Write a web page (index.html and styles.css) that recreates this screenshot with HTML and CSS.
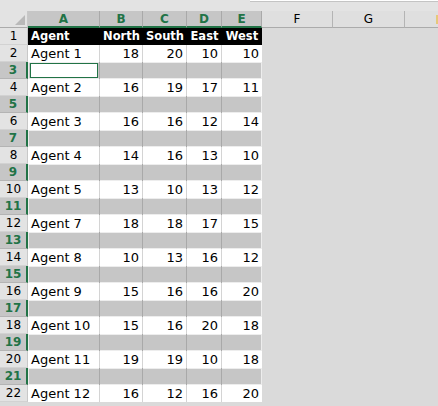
FILE: index.html
```html
<!DOCTYPE html>
<html lang="en">
<head>
    <meta charset="UTF-8">
    <meta name="viewport" content="width=device-width, initial-scale=1.0">
    <title>Agents by region</title>
    <link rel="stylesheet" href="styles.css">
</head>
<body>
    <div class="sheet">
        <div class="top"><div class="fx"></div></div>

        <div class="row head">
            <div class="corner"><span class="tri"></span></div>
            <div class="ch sel w-a">A</div>
            <div class="ch sel w-b">B</div>
            <div class="ch sel w-c">C</div>
            <div class="ch sel w-d">D</div>
            <div class="ch sel w-e">E</div>
            <div class="ch w-f">F</div>
            <div class="ch w-g">G</div>
            <div class="ch w-h"><span class="tip"></span></div>
        </div>

        <div id="rows"></div>
    </div>

<script>
    const rows = document.getElementById('rows');

    // every even row is an empty spacer row that is part of the selection
    const data = [
        ['Agent 1', 18, 20, 10, 10],
        ['Agent 2', 16, 19, 17, 11],
        ['Agent 3', 16, 16, 12, 14],
        ['Agent 4', 14, 16, 13, 10],
        ['Agent 5', 13, 10, 13, 12],
        ['Agent 7', 18, 18, 17, 15],
        ['Agent 8', 10, 13, 16, 12],
        ['Agent 9', 15, 16, 16, 20],
        ['Agent 10', 15, 16, 20, 18],
        ['Agent 11', 19, 19, 10, 18],
        ['Agent 12', 16, 12, 16, 20]
    ];
    const widths = ['w-a', 'w-b', 'w-c', 'w-d', 'w-e'];

    function addRow(num, values, kind) {
        const row = document.createElement('div');
        row.className = 'row';
        let html = `<div class="rh ${kind === 'pick' ? 'on' : ''}">${num}</div>`;
        html += `<div class="cells ${kind}">`;
        widths.forEach((w, i) => {
            const v = values ? values[i] : '';
            const cls = i === 0 ? 'txt' : (kind === 'title' ? 'mid' : 'num');
            const active = (num === 3 && i === 0) ? '<span class="active"></span>' : '';
            html += `<div class="c ${w} ${cls}">${active}${v}</div>`;
        });
        html += '</div>';
        row.innerHTML = html;
        rows.appendChild(row);
    }

    addRow(1, ['Agent', 'North', 'South', 'East', 'West'], 'title');
    data.forEach((item, i) => {
        addRow(2 + i * 2, item, 'plain');
        if (i < data.length - 1) {
            addRow(3 + i * 2, null, 'pick');
        }
    });
</script>
</body>
</html>
```

FILE: styles.css
```css
body {
    margin: 0;
    background-color: #dadada;
    font-family: "DejaVu Sans", Verdana, sans-serif;
    color: #000;
    overflow: hidden;
}

.sheet {
    width: 438px;
    height: 406px;
}

.top {
    height: 11px;
    background-color: #e3e3e3;
}

.fx {
    margin-left: 250px;
    height: 1px;
    background: #fff;
    border-bottom: 1px solid #c4c4c4;
}

.row {
    display: flex;
    height: 17px;
}

/* column header strip */
.head {
    height: 17px;
    font-size: 12px;
    line-height: 16px;
}

.corner {
    position: relative;
    width: 28px;
    box-sizing: border-box;
    background: #e3e3e3;
    border-bottom: 1px solid #ababab;
    border-right: 1px solid #c8c8c8;
}

.corner .tri {
    position: absolute;
    right: 2px;
    bottom: 2px;
    width: 0;
    height: 0;
    border-left: 10px solid transparent;
    border-bottom: 10px solid #b9b9b9;
}

.ch {
    box-sizing: border-box;
    text-align: center;
    background: #dfdfdf;
    border-right: 1px solid #b4b4b4;
    border-bottom: 1px solid #ababab;
}

.ch.sel {
    background: #c6c6c6;
    color: #217346;
    font-weight: bold;
    border-right: 1px solid #a9a9a9;
    border-bottom: 2px solid #217346;
}

.ch.w-h {
    position: relative;
    flex: 1;
    border-right: none;
}

.ch .tip {
    position: absolute;
    right: 0;
    top: 4px;
    width: 2px;
    height: 9px;
    background: #e6c87a;
}

.w-a { width: 72px; }
.w-b { width: 43px; }
.w-c { width: 44px; }
.w-d { width: 35px; }
.w-e { width: 40px; }
.w-f { width: 71px; }
.w-g { width: 72px; }

/* row headers */
.rh {
    width: 28px;
    box-sizing: border-box;
    background: #e3e3e3;
    border-right: 1px solid #c8c8c8;
    border-bottom: 1px solid #d2d2d2;
    text-align: center;
    font-size: 12px;
    line-height: 16px;
}

.rh.on {
    background: #c6c6c6;
    color: #217346;
    font-weight: bold;
    border-right: 2px solid #217346;
    border-bottom-color: #b4b4b4;
}

/* cells */
.cells {
    display: flex;
    width: 234px;
    font-size: 13px;
    line-height: 17px;
}

.c {
    position: relative;
    box-sizing: border-box;
    padding: 0 3px;
    white-space: nowrap;
    border-right: 1px solid #d4d4d4;
}

.c.w-e {
    border-right: none;
}

.c.num {
    text-align: right;
}

.c.mid {
    text-align: center;
    padding: 0;
}

.plain {
    background: #fff;
}

.title {
    background: #000;
    color: #fff;
    font-weight: bold;
    font-size: 11.5px;
}

.title .c {
    border-right: none;
}

.pick {
    background: #c6c6c6;
    box-shadow: inset 0 0 0 1px #ededed;
}

.pick .c {
    border-right-color: #a9a9a9;
}

/* active cell inside the selection */
.active {
    position: absolute;
    left: 2px;
    top: 1px;
    right: 1px;
    bottom: 1px;
    background: #fff;
    border: 1px solid #217346;
}
```
